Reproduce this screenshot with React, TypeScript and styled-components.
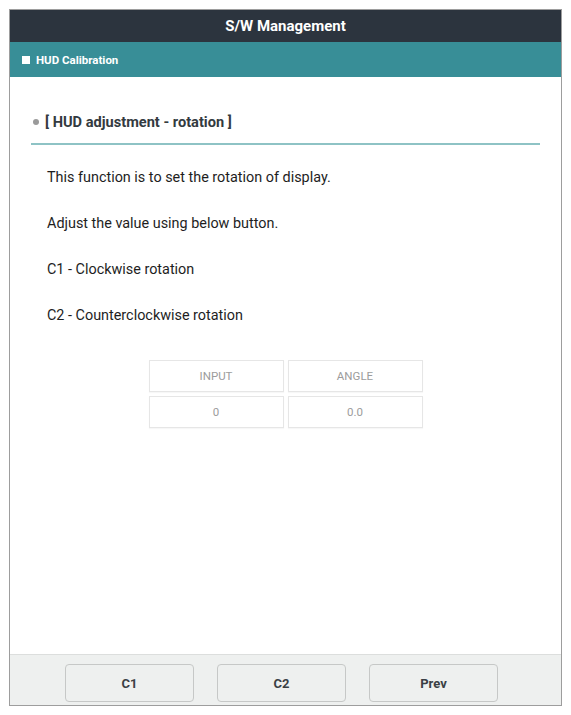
import React from "react";
import styled, { createGlobalStyle } from "styled-components";

const GlobalStyle = createGlobalStyle`
  html, body {
    margin: 0;
    padding: 0;
    background: #ffffff;
  }
  body {
    font-family: Roboto, "Noto Sans", Arial, sans-serif;
  }
`;

const Frame = styled.div`
  box-sizing: border-box;
  margin: 9px 0 0 9px;
  width: 553px;
  height: 697px;
  display: flex;
  flex-direction: column;
  border: 1px solid #9d9d9d;
  background: #fff;
`;

const TopBar = styled.div`
  height: 32px;
  background: #2c343e;
  color: #fff;
  font-size: 15px;
  font-weight: 700;
  display: flex;
  align-items: center;
  justify-content: center;
`;

const SubBar = styled.div`
  height: 35px;
  background: #388e97;
  color: #fff;
  font-size: 11.5px;
  font-weight: 700;
  display: flex;
  align-items: center;
  gap: 6px;
  padding-left: 12px;
`;

const Square = styled.span`
  width: 8px;
  height: 8px;
  background: #fff;
`;

const Content = styled.div`
  flex: 1;
  padding: 35px 21px 0 21px;
`;

const SectionTitle = styled.div`
  display: flex;
  align-items: center;
  gap: 6px;
  height: 20px;
  padding-left: 2px;
  font-size: 14.6px;
  font-weight: 700;
  color: #333a40;
`;

const Bullet = styled.span`
  width: 6px;
  height: 6px;
  border-radius: 50%;
  background: #9a9a9a;
`;

const Divider = styled.div`
  height: 2px;
  background: #8ec3c5;
  margin: 11px 0 10px;
`;

const Text = styled.p`
  margin: 0;
  padding-left: 16px;
  font-size: 14.4px;
  line-height: 46px;
  color: #1e1e1e;
`;

const Table = styled.div`
  display: grid;
  grid-template-columns: 135px 135px;
  grid-auto-rows: 32px;
  gap: 4px;
  justify-content: center;
  margin-top: 21px;
`;

const Cell = styled.div`
  box-sizing: border-box;
  border: 1px solid #e6e6e6;
  box-shadow: 0 1px 1px rgba(0, 0, 0, 0.03);
  display: flex;
  align-items: center;
  justify-content: center;
  font-size: 11.5px;
  color: #9c9c9c;
`;

const Footer = styled.div`
  height: 51px;
  border-top: 1px solid #dcdedd;
  background: #eef0ef;
  display: flex;
  justify-content: center;
  align-items: flex-start;
  gap: 23px;
  padding: 9px 8px 0 0;
  box-sizing: border-box;
`;

const Button = styled.button`
  width: 129px;
  height: 38px;
  border: 1px solid #c6c8c7;
  border-radius: 4px;
  background: #eef0ef;
  font-family: Roboto, "Noto Sans", Arial, sans-serif;
  font-size: 13px;
  font-weight: 700;
  color: #3a3f44;
`;

const lines = [
  "This function is to set the rotation of display.",
  "Adjust the value using below button.",
  "C1 - Clockwise rotation",
  "C2 - Counterclockwise rotation",
];

const cells = ["INPUT", "ANGLE", "0", "0.0"];

const App: React.FC = () => (
  <>
    <GlobalStyle />
    <Frame>
      <TopBar>S/W Management</TopBar>
      <SubBar>
        <Square />
        HUD Calibration
      </SubBar>
      <Content>
        <SectionTitle>
          <Bullet />[ HUD adjustment - rotation ]
        </SectionTitle>
        <Divider />
        {lines.map((l) => (
          <Text key={l}>{l}</Text>
        ))}
        <Table>
          {cells.map((c) => (
            <Cell key={c}>{c}</Cell>
          ))}
        </Table>
      </Content>
      <Footer>
        <Button>C1</Button>
        <Button>C2</Button>
        <Button>Prev</Button>
      </Footer>
    </Frame>
  </>
);

export default App;
